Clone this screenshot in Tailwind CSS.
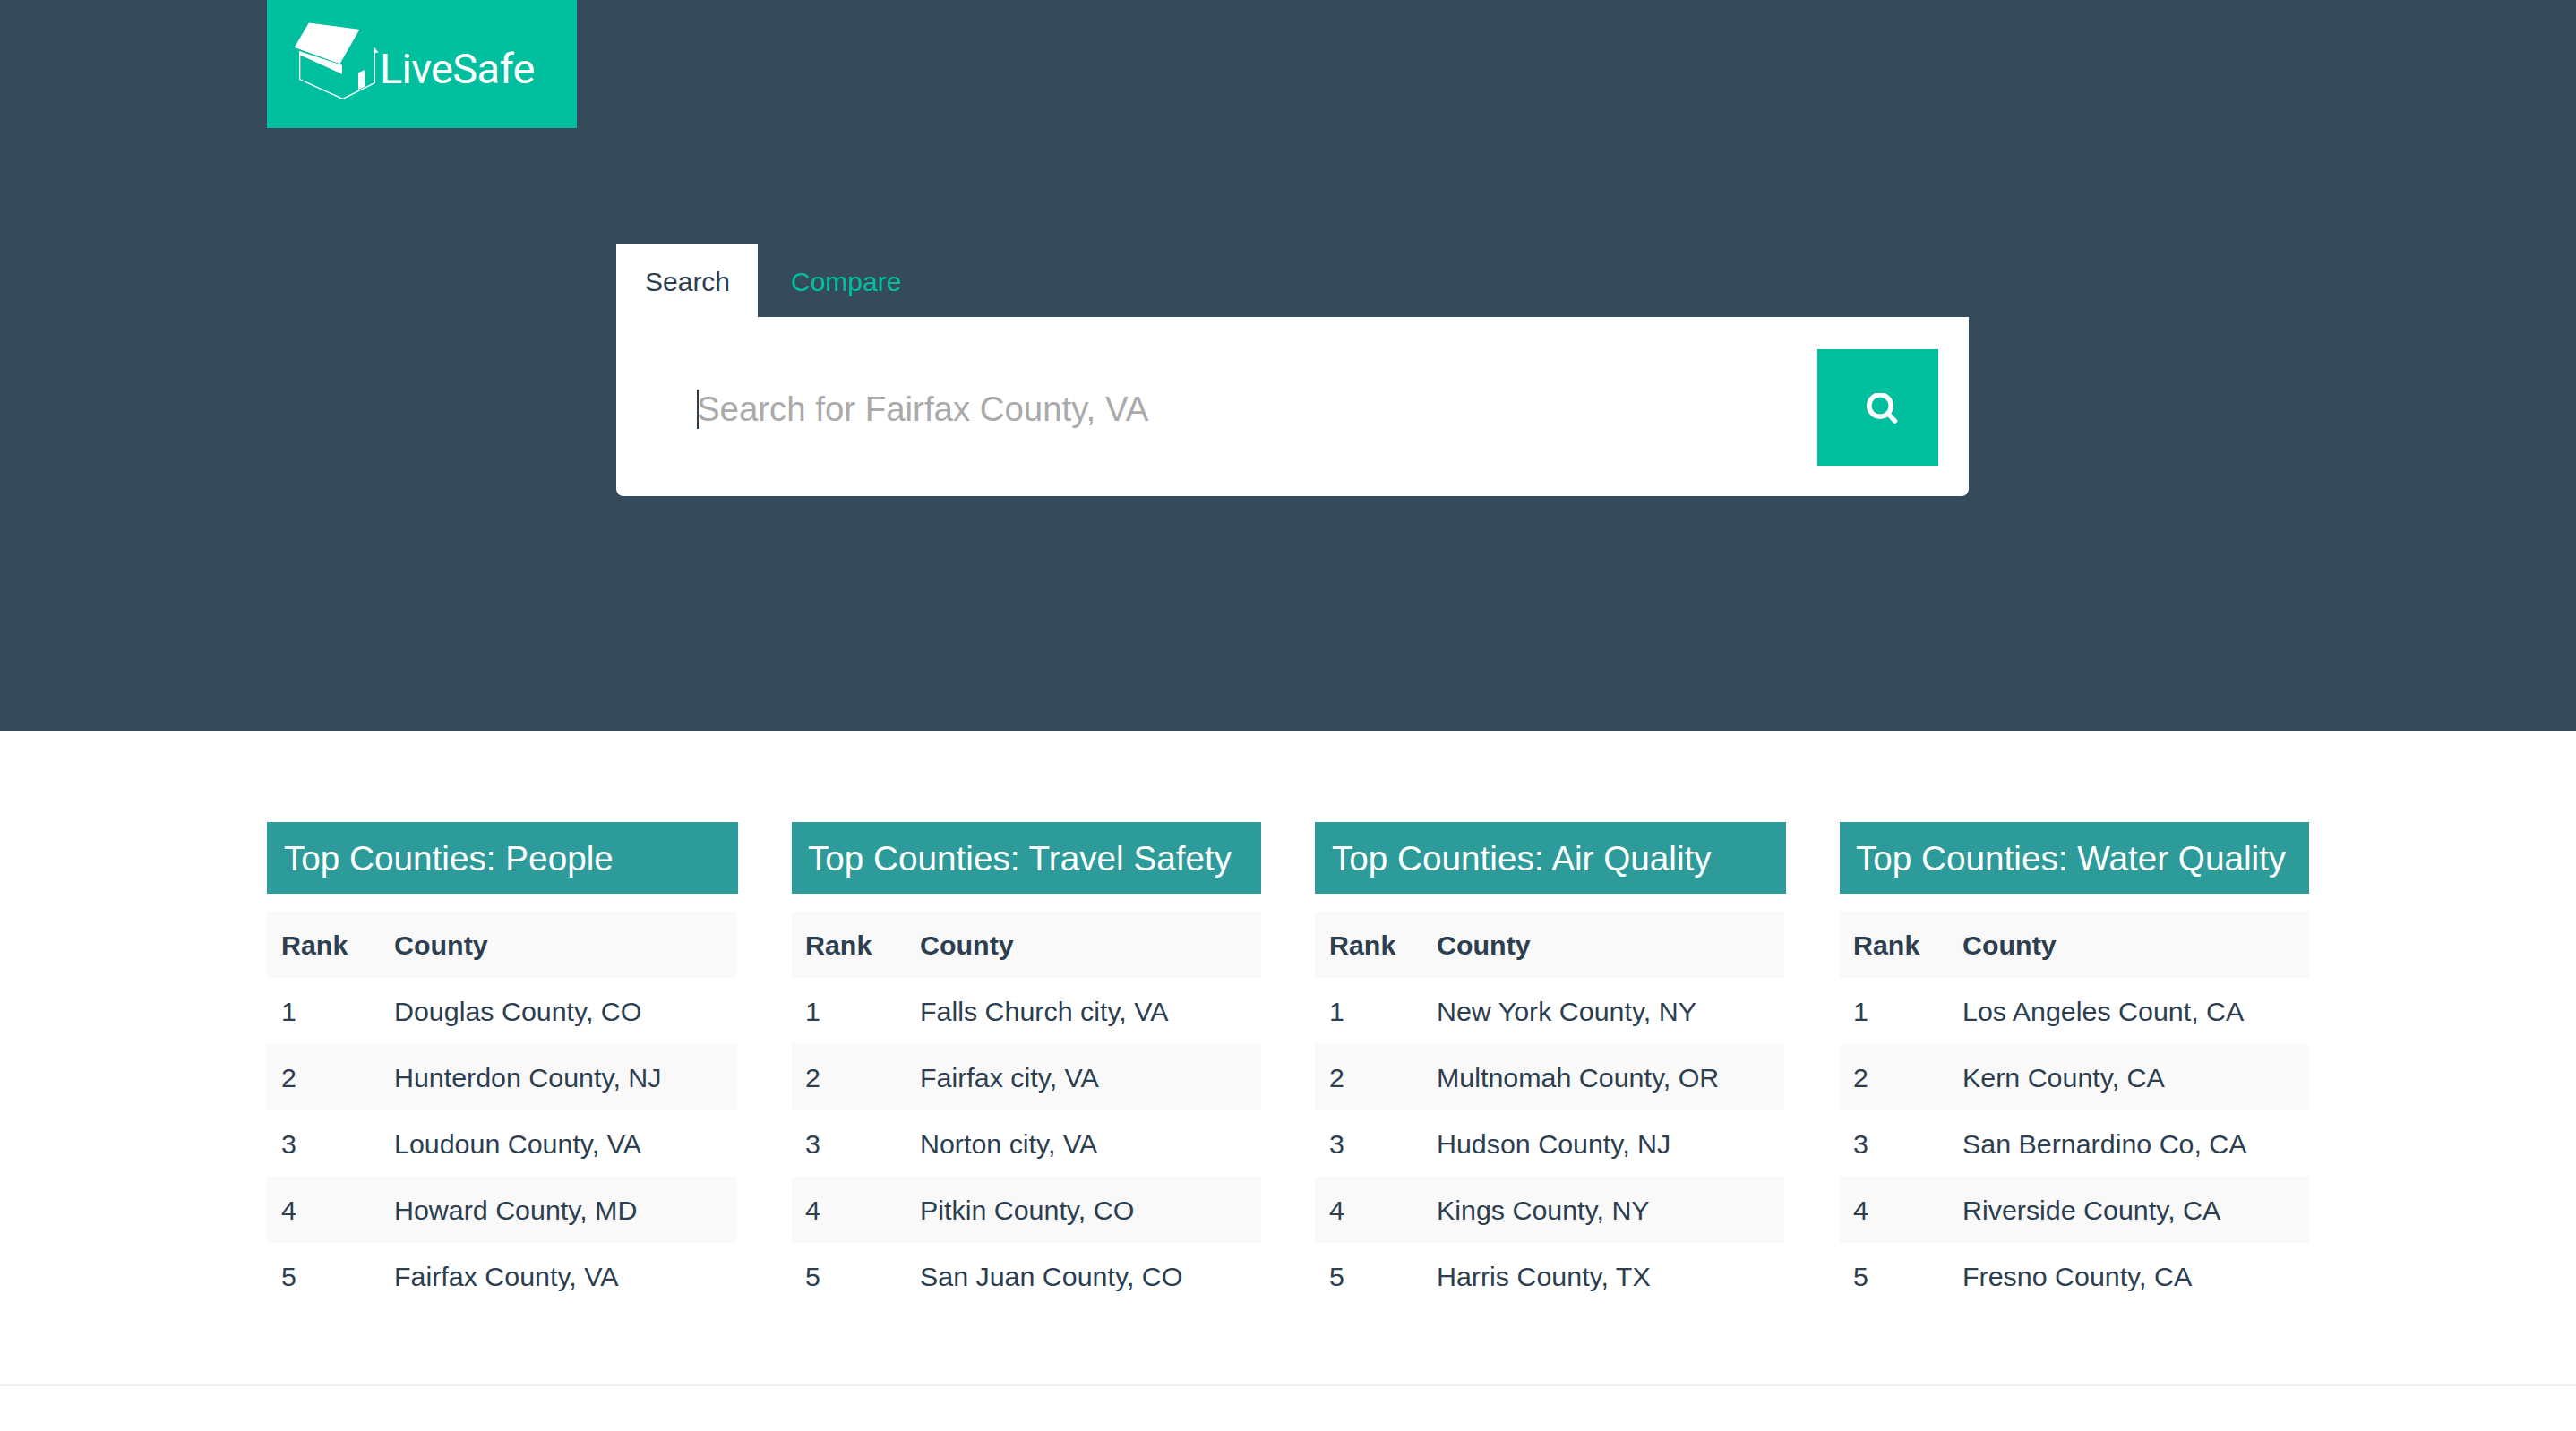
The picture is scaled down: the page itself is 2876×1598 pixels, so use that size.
<!DOCTYPE html>
<html lang="en">
<head>
<meta charset="utf-8">
<title>LiveSafe</title>
<script src="https://cdn.jsdelivr.net/npm/@tailwindcss/browser@4"></script>
</head>
<body class="h-[1598px] overflow-hidden bg-white text-[#2c3e50] [font-family:'Liberation_Sans',Arial,sans-serif]">
<header class="h-[816px] bg-[#354b5c]">
  <div class="ml-[298px] flex h-[143px] w-[346px] items-start bg-[#00bf9f] pl-[29px] pt-[23px]">
    <svg class="h-[90px] w-[98px] shrink-0" viewBox="111 69 294 270" fill="#fff">
      <path d="M165 78 L332 100 L268 212 L118 158 Z" stroke="#fff" stroke-width="3" stroke-linejoin="round"/>
      <path d="M134 172 L276 218 V248 L134 184 Z"/>
      <path d="M330 244 L352 234 V290 L330 300 Z"/>
      <path d="M134 172 V266 L278 331 L385 278 V165" fill="none" stroke="#fff" stroke-width="4" stroke-linejoin="round"/>
      <path d="M382 157 L398 176 H382 Z"/>
    </svg>
    <span class="ml-[-1px] mt-[26px] text-[47px] leading-[56px] tracking-[-0.7px] text-white [font-family:Roboto,sans-serif] font-normal">LiveSafe</span>
  </div>
  <div class="ml-[688px] mt-[129px] w-[1510px]">
    <div class="flex h-[82px] items-center pt-[2px] text-[30px]">
      <div class="flex h-[82px] w-[158px] mt-[-2px] items-center bg-white pl-[32px] pt-[2px]">Search</div>
      <a class="ml-[37px] text-[#00bf9f]" href="#">Compare</a>
    </div>
    <form class="relative flex h-[200px] items-center rounded-b-lg bg-white pl-[90px] pr-[34px] pt-[2px]">
      <span class="absolute left-[90px] top-[81px] h-[44px] w-[2px] bg-[#2c3e50]"></span>
      <input class="mt-[4px] h-[60px] min-w-0 flex-1 bg-transparent text-[38.4px] outline-none placeholder:text-[#aaaaaa]" type="text" placeholder="Search for Fairfax County, VA">
      <button class="flex h-[130px] w-[135px] shrink-0 items-center justify-center bg-[#00bf9f]" type="button" aria-label="Search">
        <svg class="ml-[10px] mt-[4px] h-[36px] w-[36px]" viewBox="0 0 36 36" fill="none" stroke="#fff" stroke-width="5.5" stroke-linecap="round">
          <circle cx="15" cy="14" r="12.25"/>
          <path d="M25 24 L31.5 31"/>
        </svg>
      </button>
    </form>
  </div>
</header>
<main class="ml-[298px] mt-[102px] grid w-[2280px] grid-cols-[526px_524px_526px_524px] gap-x-[60px]">
  <section>
    <h2 class="flex h-[80px] items-center bg-[#2e9b9b] pl-[19px] pt-[2px] text-[38.7px] text-white">Top Counties: People</h2>
    <table class="mt-[20px] w-[524px] table-fixed text-left text-[30.4px]">
      <colgroup><col class="w-[126px]"><col></colgroup>
      <thead><tr class="h-[74px] bg-[#f9f9f9]"><th class="pl-[16px] pt-[2px] font-bold">Rank</th><th class="pl-[16px] pt-[2px] font-bold">County</th></tr></thead>
      <tbody>
        <tr class="h-[74px]"><td class="pl-[16px] pt-[2px]">1</td><td class="pl-[16px] pt-[2px]">Douglas County, CO</td></tr>
        <tr class="h-[74px] bg-[#f9f9f9]"><td class="pl-[16px] pt-[2px]">2</td><td class="pl-[16px] pt-[2px]">Hunterdon County, NJ</td></tr>
        <tr class="h-[74px]"><td class="pl-[16px] pt-[2px]">3</td><td class="pl-[16px] pt-[2px]">Loudoun County, VA</td></tr>
        <tr class="h-[74px] bg-[#f9f9f9]"><td class="pl-[16px] pt-[2px]">4</td><td class="pl-[16px] pt-[2px]">Howard County, MD</td></tr>
        <tr class="h-[74px]"><td class="pl-[16px] pt-[2px]">5</td><td class="pl-[16px] pt-[2px]">Fairfax County, VA</td></tr>
      </tbody>
    </table>
  </section>
  <section>
    <h2 class="flex h-[80px] items-center bg-[#2e9b9b] pl-[18px] pt-[2px] text-[38.7px] text-white">Top Counties: Travel Safety</h2>
    <table class="mt-[20px] w-[524px] table-fixed text-left text-[30.4px]">
      <colgroup><col class="w-[127px]"><col></colgroup>
      <thead><tr class="h-[74px] bg-[#f9f9f9]"><th class="pl-[15px] pt-[2px] font-bold">Rank</th><th class="pl-[16px] pt-[2px] font-bold">County</th></tr></thead>
      <tbody>
        <tr class="h-[74px]"><td class="pl-[15px] pt-[2px]">1</td><td class="pl-[16px] pt-[2px]">Falls Church city, VA</td></tr>
        <tr class="h-[74px] bg-[#f9f9f9]"><td class="pl-[15px] pt-[2px]">2</td><td class="pl-[16px] pt-[2px]">Fairfax city, VA</td></tr>
        <tr class="h-[74px]"><td class="pl-[15px] pt-[2px]">3</td><td class="pl-[16px] pt-[2px]">Norton city, VA</td></tr>
        <tr class="h-[74px] bg-[#f9f9f9]"><td class="pl-[15px] pt-[2px]">4</td><td class="pl-[16px] pt-[2px]">Pitkin County, CO</td></tr>
        <tr class="h-[74px]"><td class="pl-[15px] pt-[2px]">5</td><td class="pl-[16px] pt-[2px]">San Juan County, CO</td></tr>
      </tbody>
    </table>
  </section>
  <section>
    <h2 class="flex h-[80px] items-center bg-[#2e9b9b] pl-[19px] pt-[2px] text-[38.7px] text-white">Top Counties: Air Quality</h2>
    <table class="mt-[20px] w-[524px] table-fixed text-left text-[30.4px]">
      <colgroup><col class="w-[120px]"><col></colgroup>
      <thead><tr class="h-[74px] bg-[#f9f9f9]"><th class="pl-[16px] pt-[2px] font-bold">Rank</th><th class="pl-[16px] pt-[2px] font-bold">County</th></tr></thead>
      <tbody>
        <tr class="h-[74px]"><td class="pl-[16px] pt-[2px]">1</td><td class="pl-[16px] pt-[2px]">New York County, NY</td></tr>
        <tr class="h-[74px] bg-[#f9f9f9]"><td class="pl-[16px] pt-[2px]">2</td><td class="pl-[16px] pt-[2px]">Multnomah County, OR</td></tr>
        <tr class="h-[74px]"><td class="pl-[16px] pt-[2px]">3</td><td class="pl-[16px] pt-[2px]">Hudson County, NJ</td></tr>
        <tr class="h-[74px] bg-[#f9f9f9]"><td class="pl-[16px] pt-[2px]">4</td><td class="pl-[16px] pt-[2px]">Kings County, NY</td></tr>
        <tr class="h-[74px]"><td class="pl-[16px] pt-[2px]">5</td><td class="pl-[16px] pt-[2px]">Harris County, TX</td></tr>
      </tbody>
    </table>
  </section>
  <section>
    <h2 class="flex h-[80px] items-center bg-[#2e9b9b] pl-[18px] pt-[2px] text-[38.7px] text-white">Top Counties: Water Quality</h2>
    <table class="mt-[20px] w-[524px] table-fixed text-left text-[30.4px]">
      <colgroup><col class="w-[121px]"><col></colgroup>
      <thead><tr class="h-[74px] bg-[#f9f9f9]"><th class="pl-[15px] pt-[2px] font-bold">Rank</th><th class="pl-[16px] pt-[2px] font-bold">County</th></tr></thead>
      <tbody>
        <tr class="h-[74px]"><td class="pl-[15px] pt-[2px]">1</td><td class="pl-[16px] pt-[2px]">Los Angeles Count, CA</td></tr>
        <tr class="h-[74px] bg-[#f9f9f9]"><td class="pl-[15px] pt-[2px]">2</td><td class="pl-[16px] pt-[2px]">Kern County, CA</td></tr>
        <tr class="h-[74px]"><td class="pl-[15px] pt-[2px]">3</td><td class="pl-[16px] pt-[2px]">San Bernardino Co, CA</td></tr>
        <tr class="h-[74px] bg-[#f9f9f9]"><td class="pl-[15px] pt-[2px]">4</td><td class="pl-[16px] pt-[2px]">Riverside County, CA</td></tr>
        <tr class="h-[74px]"><td class="pl-[15px] pt-[2px]">5</td><td class="pl-[16px] pt-[2px]">Fresno County, CA</td></tr>
      </tbody>
    </table>
  </section>
</main>
<footer class="mt-[84px] border-t-2 border-[#ecf0f1]"></footer>
</body>
</html>
